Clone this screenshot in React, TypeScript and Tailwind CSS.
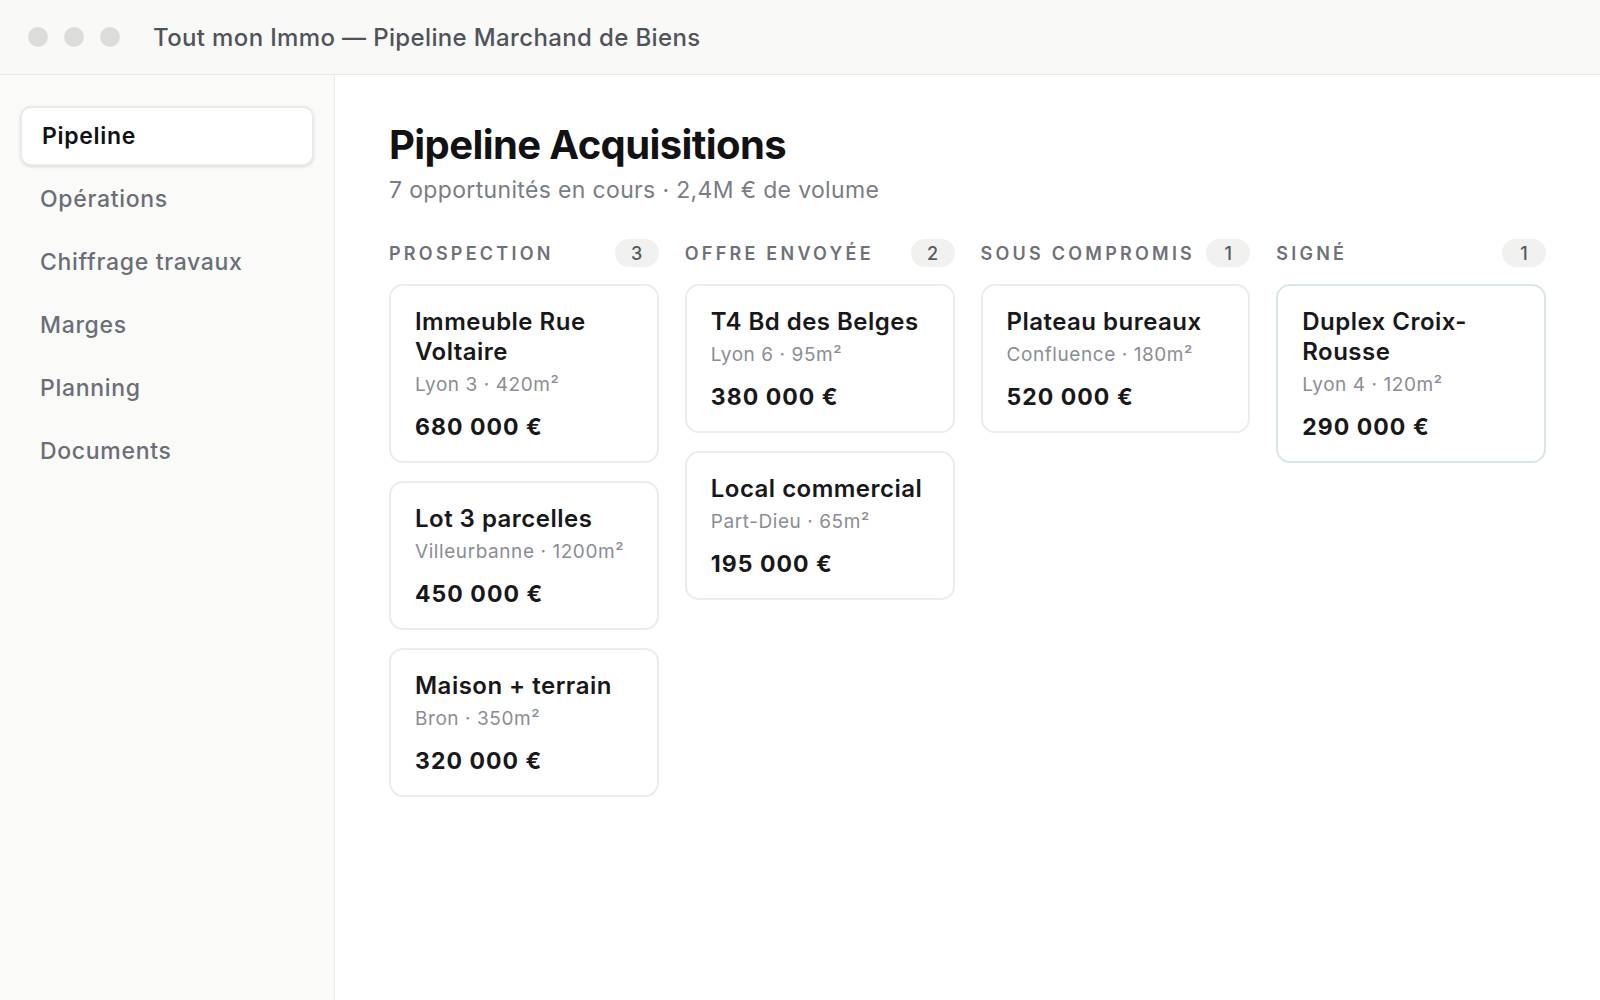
import React from "react";

interface Deal {
  titre: string;
  lieu: string;
  prix: string;
}

interface Colonne {
  nom: string;
  deals: Deal[];
  signe?: boolean;
}

const menu = ["Pipeline", "Opérations", "Chiffrage travaux", "Marges", "Planning", "Documents"];

const colonnes: Colonne[] = [
  {
    nom: "Prospection",
    deals: [
      { titre: "Immeuble Rue Voltaire", lieu: "Lyon 3 · 420m²", prix: "680 000 €" },
      { titre: "Lot 3 parcelles", lieu: "Villeurbanne · 1200m²", prix: "450 000 €" },
      { titre: "Maison + terrain", lieu: "Bron · 350m²", prix: "320 000 €" },
    ],
  },
  {
    nom: "Offre envoyée",
    deals: [
      { titre: "T4 Bd des Belges", lieu: "Lyon 6 · 95m²", prix: "380 000 €" },
      { titre: "Local commercial", lieu: "Part-Dieu · 65m²", prix: "195 000 €" },
    ],
  },
  {
    nom: "Sous compromis",
    deals: [{ titre: "Plateau bureaux", lieu: "Confluence · 180m²", prix: "520 000 €" }],
  },
  {
    nom: "Signé",
    signe: true,
    deals: [{ titre: "Duplex Croix-Rousse", lieu: "Lyon 4 · 120m²", prix: "290 000 €" }],
  },
];

function Carte({ deal, signe }: { deal: Deal; signe?: boolean }) {
  return (
    <div
      className={
        "bg-white rounded-[14px] border-2 px-[24px] pt-[21px] pb-[19px] " +
        (signe ? "border-[#dbe7df]" : "border-[#ececec]")
      }
    >
      <div className="text-[24px] leading-[30px] font-semibold text-[#18181b] tracking-[0.02em]">{deal.titre}</div>
      <div className="mt-[5px] text-[19px] leading-[26px] text-[#8a8d94] tracking-[0.03em]">{deal.lieu}</div>
      <div className="mt-[14px] text-[23px] leading-[30px] font-bold text-[#18181b] tracking-[0.045em]">{deal.prix}</div>
    </div>
  );
}

export default function App() {
  return (
    <div className="w-[1600px] h-[1000px] flex flex-col bg-white overflow-hidden" style={{ fontFamily: "Inter, 'Noto Sans', sans-serif" }}>
      <div className="h-[75px] shrink-0 flex items-center bg-[#f9f9f8] border-b border-[#e9e9e7] px-[28px]">
        <div className="flex gap-[16px]">
          <span className="w-[20px] h-[20px] rounded-full bg-[#dcdcdb]" />
          <span className="w-[20px] h-[20px] rounded-full bg-[#dcdcdb]" />
          <span className="w-[20px] h-[20px] rounded-full bg-[#dcdcdb]" />
        </div>
        <div className="ml-[33px] mt-[2px] text-[24px] font-medium text-[#50535a] tracking-[0.015em]">Tout mon Immo — Pipeline Marchand de Biens</div>
      </div>

      <div className="flex flex-1 min-h-0">
        <div className="w-[335px] shrink-0 bg-[#fafaf9] border-r border-[#ebebea] px-[20px] pt-[31px] flex flex-col gap-[3px]">
          {menu.map((item, i) => (
            <div
              key={item}
              className={
                "h-[60px] flex items-center rounded-[11px] " +
                (i === 0
                  ? "bg-white border-2 border-[#ebebea] shadow-sm px-[20px] text-[#111113] font-semibold"
                  : "px-[20px] text-[#6b6e76] font-medium")
              }
            >
              <span className="text-[23px] tracking-[0.03em]">{item}</span>
            </div>
          ))}
        </div>

        <div className="flex-1 px-[54px] pt-[42px]">
          <h1 className="text-[40px] leading-[56px] font-bold text-[#121214] tracking-[-0.015em]">Pipeline Acquisitions</h1>
          <p className="mt-[2px] text-[23px] leading-[30px] text-[#7a7d84] tracking-[0.015em]">7 opportunités en cours · 2,4M € de volume</p>

          <div className="mt-[34px] grid grid-cols-4 gap-[26px]">
            {colonnes.map((col) => (
              <div key={col.nom} className="flex flex-col">
                <div className="h-[28px] flex items-center justify-between">
                  <span className="text-[18px] font-semibold uppercase tracking-[0.18em] text-[#6e7178]">{col.nom}</span>
                  <span className="h-[28px] min-w-[44px] px-[16px] rounded-full bg-[#f1f1f0] flex items-center justify-center text-[18px] font-medium text-[#55585f]">
                    {col.deals.length}
                  </span>
                </div>
                <div className="mt-[17px] flex flex-col gap-[18px]">
                  {col.deals.map((d) => (
                    <Carte key={d.titre} deal={d} signe={col.signe} />
                  ))}
                </div>
              </div>
            ))}
          </div>
        </div>
      </div>
    </div>
  );
}
